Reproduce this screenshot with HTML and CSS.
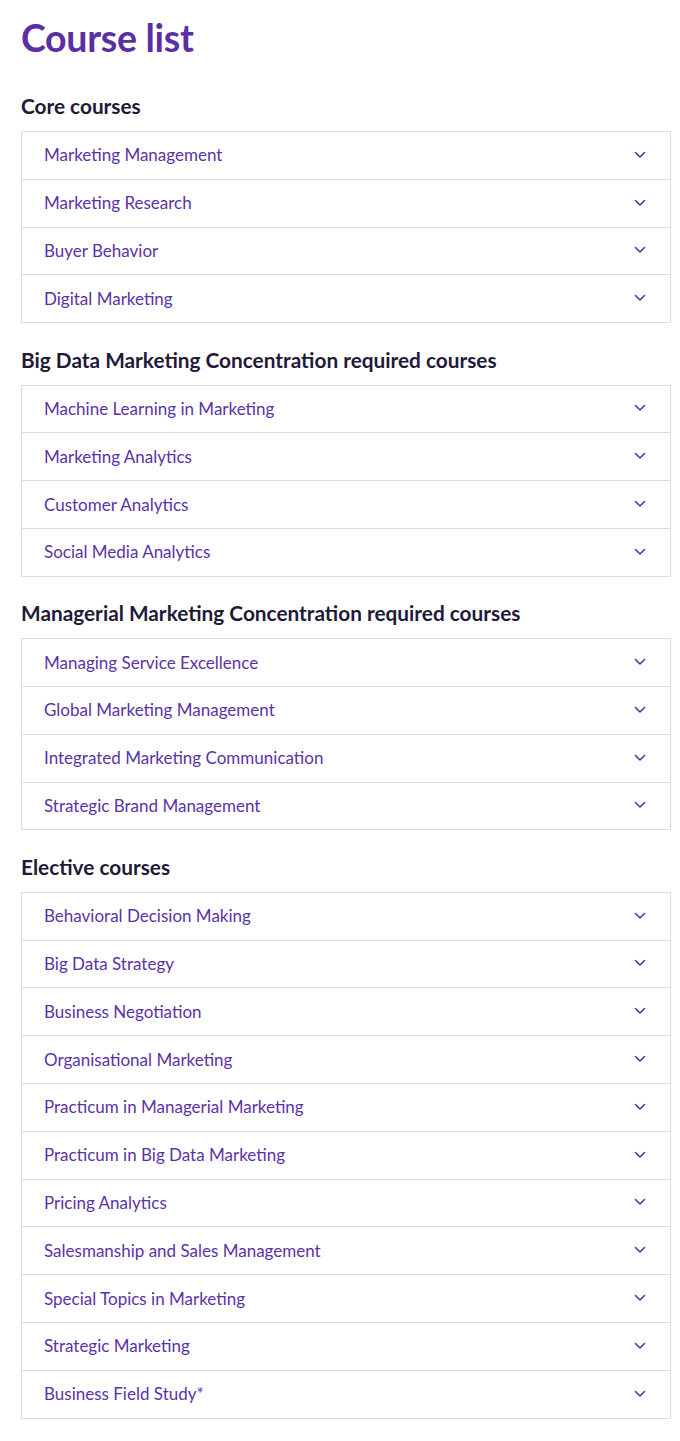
FILE: index.html
```html
<!DOCTYPE html>
<html lang="en">
<head>
<meta charset="utf-8">
<title>Course list</title>
<link rel="stylesheet" href="styles.css">
</head>
<body>
<main class="page">
  <h1 class="title">Course list</h1>

  <section class="group">
    <h2 class="group-title">Core courses</h2>
    <ul class="accordion">
      <li class="item"><span>Marketing Management</span><svg class="chev" viewBox="0 0 12 8"><path d="M1.5 1.5 6 6l4.5-4.5"/></svg></li>
      <li class="item"><span>Marketing Research</span><svg class="chev" viewBox="0 0 12 8"><path d="M1.5 1.5 6 6l4.5-4.5"/></svg></li>
      <li class="item"><span>Buyer Behavior</span><svg class="chev" viewBox="0 0 12 8"><path d="M1.5 1.5 6 6l4.5-4.5"/></svg></li>
      <li class="item"><span>Digital Marketing</span><svg class="chev" viewBox="0 0 12 8"><path d="M1.5 1.5 6 6l4.5-4.5"/></svg></li>
    </ul>
  </section>

  <section class="group">
    <h2 class="group-title">Big Data Marketing Concentration required courses</h2>
    <ul class="accordion">
      <li class="item"><span>Machine Learning in Marketing</span><svg class="chev" viewBox="0 0 12 8"><path d="M1.5 1.5 6 6l4.5-4.5"/></svg></li>
      <li class="item"><span>Marketing Analytics</span><svg class="chev" viewBox="0 0 12 8"><path d="M1.5 1.5 6 6l4.5-4.5"/></svg></li>
      <li class="item"><span>Customer Analytics</span><svg class="chev" viewBox="0 0 12 8"><path d="M1.5 1.5 6 6l4.5-4.5"/></svg></li>
      <li class="item"><span>Social Media Analytics</span><svg class="chev" viewBox="0 0 12 8"><path d="M1.5 1.5 6 6l4.5-4.5"/></svg></li>
    </ul>
  </section>

  <section class="group">
    <h2 class="group-title">Managerial Marketing Concentration required courses</h2>
    <ul class="accordion">
      <li class="item"><span>Managing Service Excellence</span><svg class="chev" viewBox="0 0 12 8"><path d="M1.5 1.5 6 6l4.5-4.5"/></svg></li>
      <li class="item"><span>Global Marketing Management</span><svg class="chev" viewBox="0 0 12 8"><path d="M1.5 1.5 6 6l4.5-4.5"/></svg></li>
      <li class="item"><span>Integrated Marketing Communication</span><svg class="chev" viewBox="0 0 12 8"><path d="M1.5 1.5 6 6l4.5-4.5"/></svg></li>
      <li class="item"><span>Strategic Brand Management</span><svg class="chev" viewBox="0 0 12 8"><path d="M1.5 1.5 6 6l4.5-4.5"/></svg></li>
    </ul>
  </section>

  <section class="group">
    <h2 class="group-title">Elective courses</h2>
    <ul class="accordion">
      <li class="item"><span>Behavioral Decision Making</span><svg class="chev" viewBox="0 0 12 8"><path d="M1.5 1.5 6 6l4.5-4.5"/></svg></li>
      <li class="item"><span>Big Data Strategy</span><svg class="chev" viewBox="0 0 12 8"><path d="M1.5 1.5 6 6l4.5-4.5"/></svg></li>
      <li class="item"><span>Business Negotiation</span><svg class="chev" viewBox="0 0 12 8"><path d="M1.5 1.5 6 6l4.5-4.5"/></svg></li>
      <li class="item"><span>Organisational Marketing</span><svg class="chev" viewBox="0 0 12 8"><path d="M1.5 1.5 6 6l4.5-4.5"/></svg></li>
      <li class="item"><span>Practicum in Managerial Marketing</span><svg class="chev" viewBox="0 0 12 8"><path d="M1.5 1.5 6 6l4.5-4.5"/></svg></li>
      <li class="item"><span>Practicum in Big Data Marketing</span><svg class="chev" viewBox="0 0 12 8"><path d="M1.5 1.5 6 6l4.5-4.5"/></svg></li>
      <li class="item"><span>Pricing Analytics</span><svg class="chev" viewBox="0 0 12 8"><path d="M1.5 1.5 6 6l4.5-4.5"/></svg></li>
      <li class="item"><span>Salesmanship and Sales Management</span><svg class="chev" viewBox="0 0 12 8"><path d="M1.5 1.5 6 6l4.5-4.5"/></svg></li>
      <li class="item"><span>Special Topics in Marketing</span><svg class="chev" viewBox="0 0 12 8"><path d="M1.5 1.5 6 6l4.5-4.5"/></svg></li>
      <li class="item"><span>Strategic Marketing</span><svg class="chev" viewBox="0 0 12 8"><path d="M1.5 1.5 6 6l4.5-4.5"/></svg></li>
      <li class="item"><span>Business Field Study*</span><svg class="chev" viewBox="0 0 12 8"><path d="M1.5 1.5 6 6l4.5-4.5"/></svg></li>
    </ul>
  </section>
</main>
</body>
</html>
```

FILE: styles.css
```css
* { box-sizing: border-box; }

html, body {
  margin: 0;
  padding: 0;
  background: #ffffff;
}

body {
  font-family: Lato, "Open Sans", "Liberation Sans", sans-serif;
}

.page {
  width: 650px;
  margin-left: 21px;
  padding-top: 14px;
  padding-bottom: 24px;
}

.title {
  margin: 0;
  font-size: 37.5px;
  line-height: 48px;
  font-weight: 700;
  color: #5b2fa3;
  letter-spacing: -0.3px;
}

.group {
  margin-top: 31px;
}

.group + .group {
  margin-top: 23.4px;
}

.group-title {
  margin: 0 0 12px 0;
  font-size: 20.8px;
  line-height: 26px;
  font-weight: 700;
  color: #1f1a3a;
}

.accordion {
  list-style: none;
  margin: 0;
  padding: 0;
  border: 1px solid #dcdbe2;
  border-bottom: none;
}

.item {
  display: flex;
  align-items: center;
  justify-content: space-between;
  height: 47.8px;
  padding: 0 24px 1px 22px;
  border-bottom: 1px solid #dcdbe2;
  font-size: 17px;
  color: #5a33a8;
}

.chev {
  width: 12px;
  height: 8px;
  fill: none;
  stroke: #5a33a8;
  stroke-width: 1.6;
  stroke-linecap: round;
  stroke-linejoin: round;
}
```
